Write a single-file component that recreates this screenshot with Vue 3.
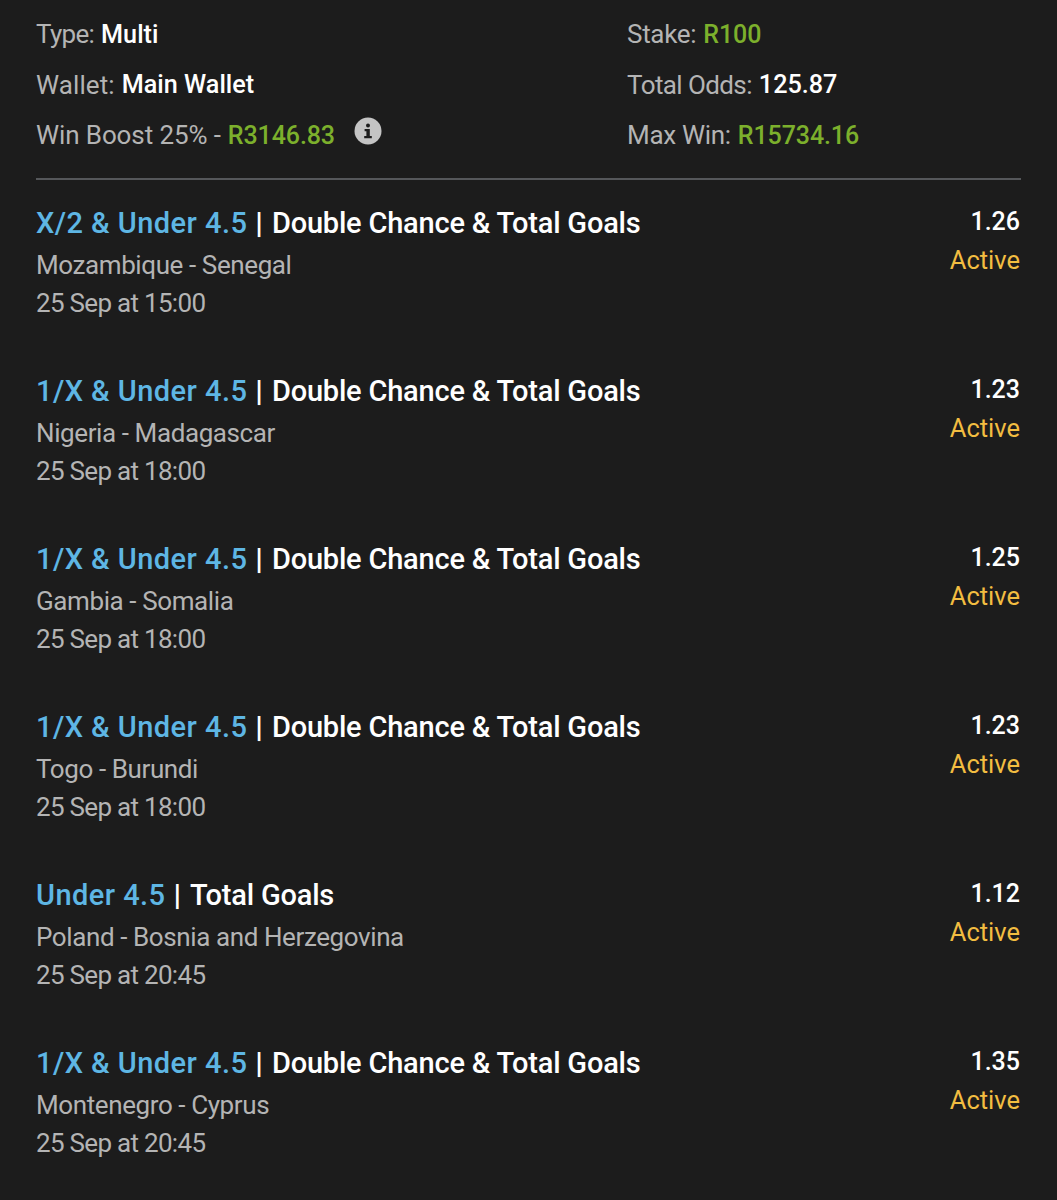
<script setup>
const summaryLeft = [
  { label: 'Type:', value: 'Multi', cls: 'white', track: -0.7 },
  { label: 'Wallet:', value: 'Main Wallet', cls: 'white', track: 0.1 },
  { label: 'Win Boost 25% -', value: 'R3146.83', cls: 'green', track: -0.1, info: true }
]
const summaryRight = [
  { label: 'Stake:', value: 'R100', cls: 'green', track: -0.3 },
  { label: 'Total Odds:', value: '125.87', cls: 'white', track: -0.6 },
  { label: 'Max Win:', value: 'R15734.16', cls: 'green', track: -0.3 }
]
const dc = 'Double Chance & Total Goals'
const bets = [
  { pick: 'X/2 & Under 4.5', market: dc, match: 'Mozambique - Senegal', time: '25 Sep at 15:00', odds: '1.26' },
  { pick: '1/X & Under 4.5', market: dc, match: 'Nigeria - Madagascar', time: '25 Sep at 18:00', odds: '1.23' },
  { pick: '1/X & Under 4.5', market: dc, match: 'Gambia - Somalia', time: '25 Sep at 18:00', odds: '1.25' },
  { pick: '1/X & Under 4.5', market: dc, match: 'Togo - Burundi', time: '25 Sep at 18:00', odds: '1.23' },
  { pick: 'Under 4.5', market: 'Total Goals', match: 'Poland - Bosnia and Herzegovina', time: '25 Sep at 20:45', odds: '1.12' },
  { pick: '1/X & Under 4.5', market: dc, match: 'Montenegro - Cyprus', time: '25 Sep at 20:45', odds: '1.35' }
]
</script>

<template>
  <div class="page">
    <div class="summary">
      <div class="col">
        <div v-for="row in summaryLeft" :key="row.label" class="line">
          <span class="label" :style="{ letterSpacing: row.track + 'px' }">{{ row.label }}</span>
          <span :class="row.cls">{{ row.value }}</span>
          <svg v-if="row.info" class="info" viewBox="0 0 28 28" width="28" height="28">
            <circle cx="14" cy="14" r="13.5" fill="#c4c4c4" />
            <circle cx="14" cy="8.4" r="2" fill="#1c1c1c" />
            <path d="M10.6 12h5.2v7h2v2.2h-7.6V19h2.2v-4.8h-1.8z" fill="#1c1c1c" />
          </svg>
        </div>
      </div>
      <div class="col">
        <div v-for="row in summaryRight" :key="row.label" class="line">
          <span class="label" :style="{ letterSpacing: row.track + 'px' }">{{ row.label }}</span>
          <span :class="row.cls">{{ row.value }}</span>
        </div>
      </div>
    </div>
    <div class="divider"></div>
    <div v-for="(bet, i) in bets" :key="i" class="bet">
      <div class="bet-main">
        <div class="title">
          <span class="pick">{{ bet.pick }}</span>
          <span class="pipe">|</span>
          <span class="market">{{ bet.market }}</span>
        </div>
        <div class="sub">{{ bet.match }}</div>
        <div class="sub time">{{ bet.time }}</div>
      </div>
      <div class="bet-side">
        <div class="odds">{{ bet.odds }}</div>
        <div class="status">Active</div>
      </div>
    </div>
  </div>
</template>

<style>
html, body { background: #1c1c1c; }
</style>

<style scoped>
.page {
  width: 1057px;
  height: 1200px;
  box-sizing: border-box;
  padding: 9px 36px 0;
  background: #1c1c1c;
  font-family: Roboto, "Liberation Sans", sans-serif;
  font-size: 26px;
  color: #b4b4b4;
  overflow: hidden;
}
.summary {
  display: grid;
  grid-template-columns: 591px 1fr;
}
.line {
  display: flex;
  align-items: center;
  gap: 7px;
  height: 50.5px;
}
.label { color: #b4b4b4; }
.white { color: #fff; font-weight: 500; font-size: 25.2px; }
.green { color: #7cb02c; font-weight: 500; font-size: 25px; letter-spacing: -0.1px; }
.info { margin-left: 12px; margin-top: -8px; }
.divider {
  height: 2px;
  margin-top: 17px;
  background: #55575a;
}
.bet {
  display: flex;
  justify-content: space-between;
  height: 168px;
}
.bet-main { padding-top: 22px; }
.title {
  display: flex;
  height: 42px;
  margin-bottom: 2px;
  line-height: 42px;
  font-size: 29px;
  color: #fff;
  font-weight: 500;
  white-space: pre;
}
.pick { color: #5eb6e4; letter-spacing: 0.45px; }
.pipe { margin: 0 9px 0 8px; font-weight: 700; font-size: 30px; }
.market { letter-spacing: -0.2px; }
.sub {
  height: 38px;
  line-height: 38px;
  color: #b4b4b4;
  letter-spacing: -0.4px;
}
.time { letter-spacing: -0.7px; }
.bet-side {
  padding: 23px 1px 0 0;
  text-align: right;
}
.odds {
  height: 38px;
  line-height: 38px;
  font-size: 25px;
  color: #fff;
  font-weight: 500;
}
.status {
  height: 38px;
  line-height: 38px;
  font-size: 25.5px;
  color: #f2bd41;
}
</style>
